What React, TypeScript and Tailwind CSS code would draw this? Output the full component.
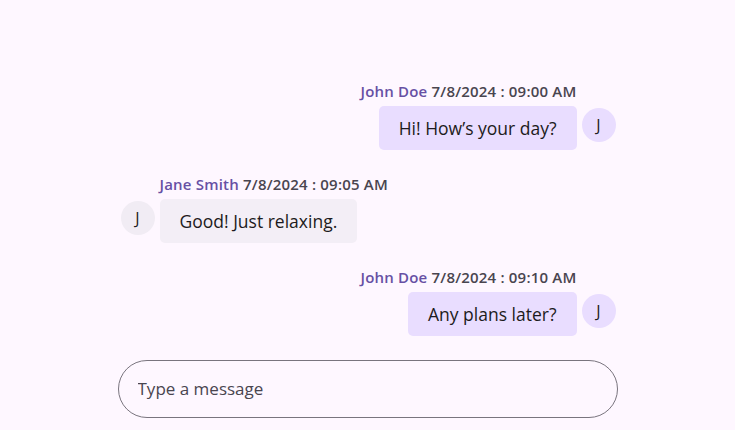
import React from 'react';

interface Message {
  id: number;
  author: string;
  time: string;
  text: string;
  mine: boolean;
}

const messages: Message[] = [
  { id: 1, author: 'John Doe', time: '7/8/2024 : 09:00 AM', text: 'Hi! How\u2019s your day?', mine: true },
  { id: 2, author: 'Jane Smith', time: '7/8/2024 : 09:05 AM', text: 'Good! Just relaxing.', mine: false },
  { id: 3, author: 'John Doe', time: '7/8/2024 : 09:10 AM', text: 'Any plans later?', mine: true },
];

const Avatar: React.FC<{ mine: boolean; initial: string }> = ({ mine, initial }) => (
  <div
    className={`mb-[8px] w-[34px] h-[34px] shrink-0 rounded-full flex items-center justify-center text-[16px] text-[#1d1b20] ${
      mine ? 'bg-[#e9ddff]' : 'bg-[#f1ecf4]'
    }`}
  >
    {initial}
  </div>
);

const ChatMessage: React.FC<{ message: Message }> = ({ message }) => {
  const { mine } = message;
  return (
    <div className={`flex items-end gap-[5px] ${mine ? 'flex-row justify-start' : 'flex-row-reverse justify-end'} ${mine ? 'self-end' : 'self-start'}`}>
      <div className={`flex flex-col ${mine ? 'items-end' : 'items-start'} gap-[5px]`}>
        <div className="text-[15px] leading-5 font-semibold tracking-[0.2px]">
          <span className="text-[#6750a4]">{message.author}</span>{' '}
          <span className="text-[#49454f]">{message.time}</span>
        </div>
        <div
          className={`px-5 py-[10px] rounded-[5px] text-[17.5px] leading-6 text-[#1d1b20] ${
            mine ? 'bg-[#e9ddff]' : 'bg-[#f3eef6]'
          }`}
        >
          {message.text}
        </div>
      </div>
      <Avatar mine={mine} initial={message.author.charAt(0)} />
    </div>
  );
};

export default function App() {
  return (
    <div
      className="min-h-screen w-full bg-[#fef7ff] pt-[81px]"
      style={{ fontFamily: '"Open Sans", "Noto Sans", sans-serif' }}
    >
      <div className="w-[500px] mx-auto flex flex-col gap-6">
        <div className="flex flex-col gap-6 pl-[3px] pr-[2px]">
          {messages.map((m) => (
            <ChatMessage key={m.id} message={m} />
          ))}
        </div>
        <div className="h-[58px] rounded-full border border-[#79747e] flex items-center px-[19px]">
          <input
            type="text"
            placeholder="Type a message"
            className="w-full bg-transparent outline-none text-[17px] text-[#1d1b20] placeholder:text-[#49454f]"
          />
        </div>
      </div>
    </div>
  );
}
